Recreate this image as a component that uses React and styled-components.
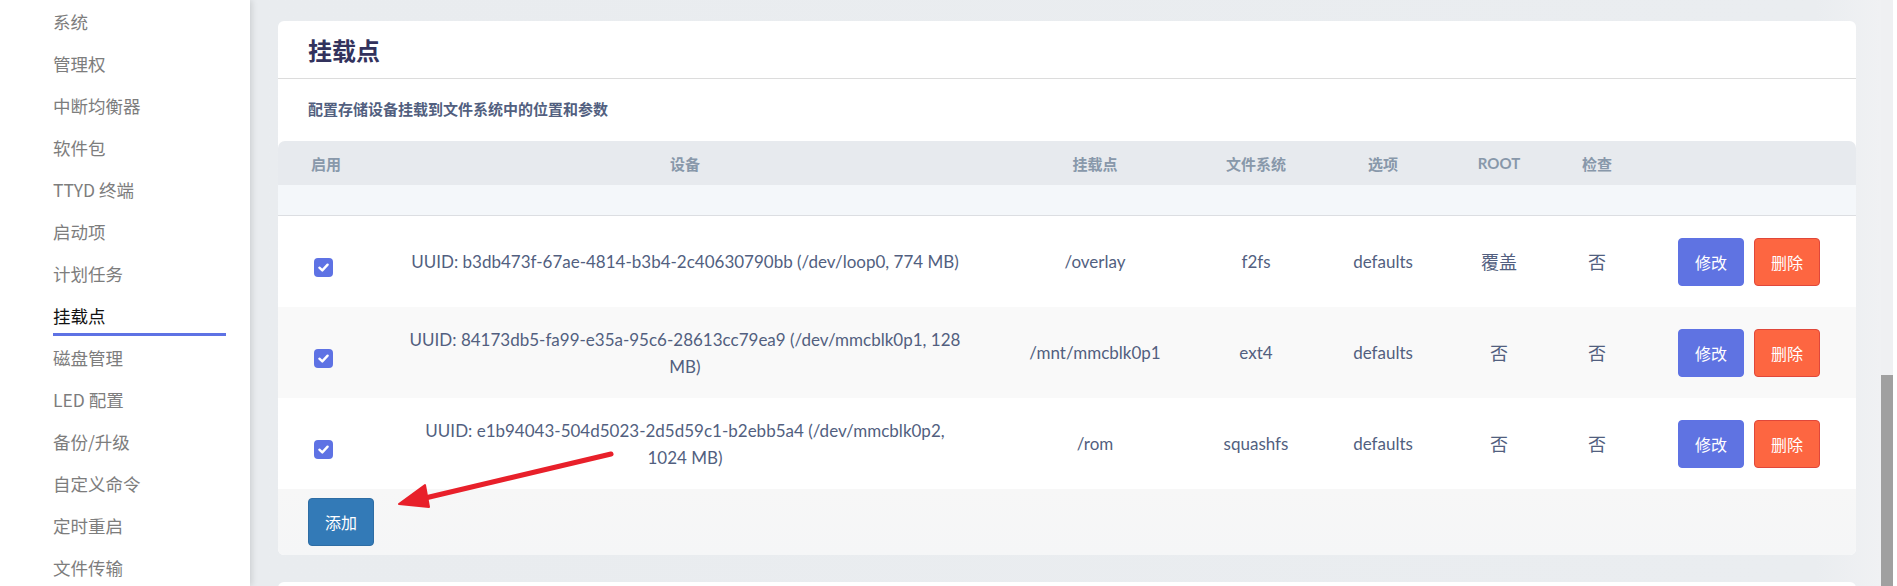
import React from 'react';
import styled, { createGlobalStyle } from 'styled-components';

const GlobalStyle = createGlobalStyle`
  html, body {
    margin: 0;
    padding: 0;
    background: #e9ecef;
    font-family: "Lato", "Noto Sans CJK SC", sans-serif;
  }
  * { box-sizing: border-box; }
`;

const navItems = [
    '系统', '管理权', '中断均衡器', '软件包', 'TTYD 终端', '启动项', '计划任务',
    '挂载点', '磁盘管理', 'LED 配置', '备份/升级', '自定义命令', '定时重启', '文件传输',
];

const mounts = [
    {
        device: 'UUID: b3db473f-67ae-4814-b3b4-2c40630790bb (/dev/loop0, 774 MB)',
        target: '/overlay',
        fs: 'f2fs',
        options: 'defaults',
        root: '覆盖',
        check: '否',
    },
    {
        device: 'UUID: 84173db5-fa99-e35a-95c6-28613cc79ea9 (/dev/mmcblk0p1, 128 MB)',
        target: '/mnt/mmcblk0p1',
        fs: 'ext4',
        options: 'defaults',
        root: '否',
        check: '否',
    },
    {
        device: 'UUID: e1b94043-504d5023-2d5d59c1-b2ebb5a4 (/dev/mmcblk0p2, 1024 MB)',
        target: '/rom',
        fs: 'squashfs',
        options: 'defaults',
        root: '否',
        check: '否',
    },
];

const Checkbox = () => (
    <CheckBox>
        <svg width="13" height="13" viewBox="0 0 12 12">
            <path d="M2.2 6.2 L4.9 8.7 L9.8 3.4" fill="none" stroke="#fff" strokeWidth="2.2" strokeLinecap="round" strokeLinejoin="round" />
        </svg>
    </CheckBox>
);

const App = () => {
    return (
        <>
            <GlobalStyle />
            <Page>
                <Sidebar>
                    {navItems.map((item) => (
                        <NavItem key={item} $active={item === '挂载点'}>
                            {item}
                        </NavItem>
                    ))}
                </Sidebar>
                <Main>
                    <Card>
                        <CardTitle>挂载点</CardTitle>
                        <CardDesc>配置存储设备挂载到文件系统中的位置和参数</CardDesc>
                        <Table>
                            <colgroup>
                                <col style={{ width: 96 }} />
                                <col style={{ width: 622 }} />
                                <col style={{ width: 198 }} />
                                <col style={{ width: 124 }} />
                                <col style={{ width: 130 }} />
                                <col style={{ width: 102 }} />
                                <col style={{ width: 94 }} />
                                <col />
                            </colgroup>
                            <thead>
                                <tr>
                                    <Th>启用</Th>
                                    <Th>设备</Th>
                                    <Th>挂载点</Th>
                                    <Th>文件系统</Th>
                                    <Th>选项</Th>
                                    <Th $latin>ROOT</Th>
                                    <Th>检查</Th>
                                    <Th />
                                </tr>
                            </thead>
                            <tbody>
                                <SpacerRow>
                                    <td colSpan={8} />
                                </SpacerRow>
                                {mounts.map((m, i) => (
                                    <Row key={m.device} $striped={i % 2 === 1}>
                                        <Td $check>
                                            <Checkbox />
                                        </Td>
                                        <Td $device>{m.device}</Td>
                                        <Td>{m.target}</Td>
                                        <Td>{m.fs}</Td>
                                        <Td>{m.options}</Td>
                                        <Td $cjk>{m.root}</Td>
                                        <Td $cjk>{m.check}</Td>
                                        <Td>
                                            <Actions>
                                                <ActionButton $kind="edit">修改</ActionButton>
                                                <ActionButton $kind="delete">删除</ActionButton>
                                            </Actions>
                                        </Td>
                                    </Row>
                                ))}
                            </tbody>
                        </Table>
                        <CardFooter>
                            <AddButton>添加</AddButton>
                        </CardFooter>
                    </Card>
                    <NextCard />
                    <Arrow width="240" height="80" viewBox="0 0 240 80">
                        <line x1="230" y1="16" x2="40" y2="61" stroke="#e8202a" strokeWidth="5" strokeLinecap="round" />
                        <path d="M18 66 L44 47 L48 69 Z" fill="#e8202a" stroke="#e8202a" strokeWidth="2" strokeLinejoin="round" />
                    </Arrow>
                </Main>
                <ScrollRail>
                    <Thumb />
                </ScrollRail>
            </Page>
        </>
    );
};

const Page = styled.div`
  display: flex;
  height: 586px;
  overflow: hidden;
`;

const Sidebar = styled.nav`
  width: 250px;
  flex-shrink: 0;
  background: #fff;
  box-shadow: 2px 0 6px rgba(0, 0, 0, 0.12);
  z-index: 1;
  display: flex;
  flex-direction: column;
`;

const NavItem = styled.div`
  height: 42px;
  margin: 0 24px 0 53px;
  display: flex;
  align-items: center;
  font-family: "Noto Sans CJK SC", sans-serif;
  font-size: 17.5px;
  color: ${(p) => (p.$active ? '#111' : '#7d7d7d')};
  border-bottom: 3px solid ${(p) => (p.$active ? '#5e72e4' : 'transparent')};
  padding-top: 3px;
  flex-shrink: 0;
`;

const Main = styled.main`
  flex: 1;
  position: relative;
  padding: 21px 25px 0 28px;
  background: linear-gradient(90deg, #e9ecef 0%, #eaedf0 96%, #f0f1f3 100%);
`;

const Card = styled.section`
  background: #fff;
  border-radius: 6px;
  overflow: hidden;
`;

const CardTitle = styled.h2`
  margin: 0;
  height: 58px;
  padding: 0 30px;
  display: flex;
  align-items: center;
  font-family: "Noto Sans CJK SC", sans-serif;
  font-size: 24px;
  font-weight: 700;
  color: #32325d;
  border-bottom: 1px solid #dcdcdc;
`;

const CardDesc = styled.p`
  margin: 0;
  height: 62px;
  padding: 0 30px 4px;
  display: flex;
  align-items: center;
  font-family: "Noto Sans CJK SC", sans-serif;
  font-size: 15px;
  font-weight: 700;
  color: #525f7f;
`;

const Table = styled.table`
  width: 100%;
  table-layout: fixed;
  border-collapse: separate;
  border-spacing: 0;
`;

const Th = styled.th`
  height: 44px;
  padding: 0;
  background: #e7eaee;
  color: #8898aa;
  font-family: ${(p) => (p.$latin ? '"Lato", sans-serif' : '"Noto Sans CJK SC", sans-serif')};
  font-size: 15px;
  font-weight: 700;
  text-align: center;

  &:first-child { border-top-left-radius: 7px; }
  &:last-child { border-top-right-radius: 7px; }
`;

const SpacerRow = styled.tr`
  td {
    height: 31px;
    padding: 0;
    background: #f4f7fa;
    border-bottom: 1px solid #dcdee2;
  }
`;

const Row = styled.tr`
  background: ${(p) => (p.$striped ? '#f9f9f9' : '#fff')};

  & + & td {
    border-top: 1px solid #dcdee2;
  }
`;

const Td = styled.td`
  height: 91px;
  padding: ${(p) => (p.$device ? '0 32px' : p.$check ? '8px 6px 0 0' : '0 6px')};
  text-align: center;
  vertical-align: middle;
  font-family: ${(p) => (p.$cjk ? '"Noto Sans CJK SC", sans-serif' : '"Lato", "Noto Sans CJK SC", sans-serif')};
  font-size: ${(p) => (p.$cjk ? '18px' : '17px')};
  line-height: 27px;
  color: #525f7f;
`;

const CheckBox = styled.span`
  display: inline-flex;
  align-items: center;
  justify-content: center;
  width: 19px;
  height: 19px;
  border-radius: 4px;
  background: #5e72e4;
  vertical-align: middle;
`;

const Actions = styled.div`
  display: flex;
  justify-content: center;
  gap: 10px;
  padding-right: 2px;
`;

const ActionButton = styled.button`
  width: 66px;
  height: 48px;
  border-radius: 4px;
  border: 1px solid ${(p) => (p.$kind === 'delete' ? '#e0473a' : '#5e72e4')};
  background: ${(p) => (p.$kind === 'delete' ? '#fd6641' : '#5f73e2')};
  color: #fff;
  font-family: "Noto Sans CJK SC", sans-serif;
  font-size: 16px;
  cursor: pointer;
`;

const CardFooter = styled.div`
  padding: 9px 30px;
  background: linear-gradient(180deg, #f7f7f7 0%, #f5f6f7 100%);
`;

const AddButton = styled.button`
  width: 66px;
  height: 48px;
  border: 1px solid #2e6da4;
  border-radius: 4px;
  background: #337ab7;
  color: #fff;
  font-family: "Noto Sans CJK SC", sans-serif;
  font-size: 16px;
  cursor: pointer;
`;

const NextCard = styled.div`
  margin-top: 27px;
  height: 40px;
  background: #fff;
  border-radius: 6px 6px 0 0;
`;

const Arrow = styled.svg`
  position: absolute;
  left: 131px;
  top: 438px;
`;

const ScrollRail = styled.div`
  width: 16px;
  flex-shrink: 0;
  display: flex;
  background: linear-gradient(90deg, #eff0f2 0 12px, #fff 12px);
`;

const Thumb = styled.div`
  width: 12px;
  margin-top: 375px;
  background: #a0a0a0;
`;

export default App;
